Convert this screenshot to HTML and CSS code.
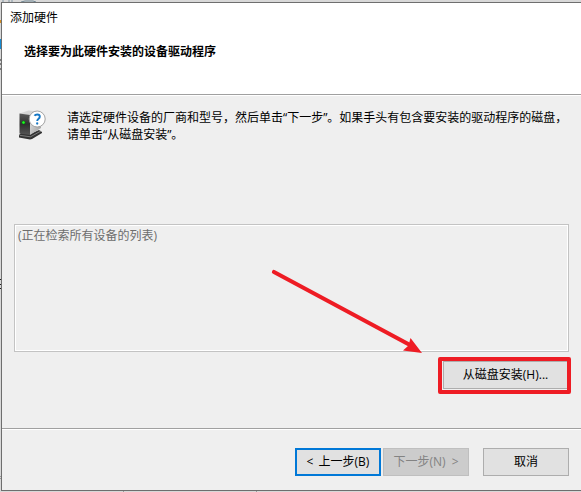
FILE: index.html
```
<!DOCTYPE html>
<html lang="zh-CN">
<head>
<meta charset="utf-8">
<title>添加硬件</title>
<link rel="stylesheet" href="styles.css">
</head>
<body>
<svg class="backdrop" width="581" height="492" viewBox="0 0 581 492" aria-hidden="true">
  <path d="M3 0v2M9 0v2M12 0v2" stroke="#8296a5"/>
  <path d="M21 2l4-1h8l3 1" stroke="#6f8794" fill="none"/>
  <path d="M0 20h1v3H0z" fill="#d18c20"/>
  <path d="M0 39h1v10H0z" fill="#168bd2"/>
  <path d="M0 60h1M0 64h1M0 69h1M0 279.500h2M0 284.500h2M0 288.500h2" stroke="#222"/>
  <path d="M0 476.500h1M0 478.500h1M123.500 491v1M256.500 491v1" stroke="#999"/>
</svg>
<main class="dialog">
  <header class="header">
    <div class="caption">添加硬件</div>
    <h1 class="title">选择要为此硬件安装的设备驱动程序</h1>
  </header>
  <section class="content">
    <div class="intro">
      <svg class="device" width="28" height="32" viewBox="0 0 28 32" aria-hidden="true">
        <defs>
          <linearGradient id="front" x2="0" y2="1"><stop stop-color="#5a5a5a"/><stop offset=".5" stop-color="#303030"/><stop offset="1" stop-color="#555"/></linearGradient>
          <linearGradient id="side" x2="1" y2="1"><stop stop-color="#eee"/><stop offset="1" stop-color="#999"/></linearGradient>
        </defs>
        <path d="M0 26l2-2 9 1 9-4 3 2v1l-10 6-2 .5-11-2z" fill="#333"/>
        <path d="M.500 4.500l9-3 10 1-9 4z" fill="#d5d5d5"/>
        <path d="M.500 4.500l10.500 1.500v20L.500 24.500z" fill="url(#front)"/>
        <path d="M11 6l11-3v16l-11 7z" fill="url(#side)"/>
        <path d="M.500 26.300l11 1.500L22 22" fill="none" stroke="#999" stroke-width=".7"/>
        <circle cx="4.500" cy="13.500" r="1.800" fill="#087b12"/>
        <circle cx="4.500" cy="13.500" r="1.200" fill="#21ff22"/>
        <circle cx="18.200" cy="10" r="8" fill="#fff" stroke="#999" stroke-width=".9"/>
        <path d="M15.500 6.800Q16.300 5.500 18.200 5.500q2.600 0 2.600 2.300c0 2-2.600 2-2.600 4.300" fill="none" stroke="#1677c5" stroke-width="1.900"/>
        <circle cx="18.200" cy="14.500" r="1.150" fill="#1677c5"/>
      </svg>
      <p class="message">请选定硬件设备的厂商和型号，然后单击“下一步”。如果手头有包含要安装的驱动程序的磁盘，<br>请单击“从磁盘安装”。</p>
    </div>
    <div class="list">(正在检索所有设备的列表)</div>
    <div class="disk-row"><div class="highlight"><button class="button disk">从磁盘安装(H)...</button></div></div>
  </section>
  <footer class="footer">
    <button class="button back">&lt; 上一步(B)</button>
    <button class="button next" disabled>下一步(N) &gt;</button>
    <button class="button cancel">取消</button>
  </footer>
</main>
<svg class="arrow" width="150" height="86" viewBox="0 0 150 86" aria-hidden="true">
  <path d="M4 3L140 76" stroke="#ee1c24" stroke-width="4.200" stroke-linecap="round"/>
  <path d="M152 84l-11.500-15-2 7.500-5.500 5z" fill="#ee1c24"/>
</svg>
</body>
</html>
```
FILE: styles.css
```
* { box-sizing: border-box; }
body {
  margin: 0;
  width: 581px;
  height: 492px;
  overflow: hidden;
  position: relative;
  padding: 2px 0 1px 1px;
  background: #d8d8d8;
  color: #000;
  font: 12px/17px "Open Sans", "Noto Sans CJK SC", sans-serif;
}
.backdrop { position: absolute; left: 0; top: 0; }
.dialog {
  display: flex;
  flex-direction: column;
  width: 580px;
  height: 489px;
  border: 1px solid #6e6e6e;
  border-right: 0;
  background: #efefef;
  position: relative;
}
.header {
  height: 92px;
  flex-shrink: 0;
  background: #fff;
  border-bottom: 1px solid #a0a0a0;
  padding: 6px 0 0 8px;
}
.caption { height: 17px; }
.title {
  margin: 17px 0 0 14px;
  font-size: 12px;
  line-height: 17px;
  font-weight: 700;
}
.content {
  height: 333px;
  border-top: 1px solid #fff;
  padding: 13px 12px 0;
}
.intro { display: flex; height: 115px; }
.device { margin: 0 0 0 5px; flex: none; overflow: visible; }
.message { margin: 0 0 0 20px; white-space: nowrap; }
.list {
  height: 128px;
  width: 555px;
  border: 1px solid #c3c3c3;
  box-shadow: inset 1px 1px #fff, inset -1px -1px #fff;
  color: #6d6d6d;
  padding: 2px 3px;
}
.disk-row { display: flex; justify-content: flex-end; padding: 5px 10px 0 0; margin-right: -12px; }
.highlight {
  width: 133px;
  height: 37px;
  border: 4px solid #ee1c24;
  border-radius: 2px;
  display: flex;
  padding: 0 0 1px 1px;
}
.button {
  width: 86px;
  height: 28px;
  padding: 0 0 1px;
  border: 1px solid #adadad;
  background: #e1e1e1;
  color: #000;
  font: inherit;
  white-space: pre;
}
.disk { width: 124px; border-right: 0; }
.footer {
  height: 62px;
  border-top: 1px solid #a0a0a0;
  box-shadow: inset 0 1px #fff;
  display: flex;
  justify-content: flex-end;
  padding: 19px 12px 0 0;
}
.back { border: 2px solid #0078d7; word-spacing: 2px; }
.next { margin: 0 14px 0 2px; background: #ccc; border-color: #bfbfbf; color: #838383; word-spacing: 3px; }
.arrow { position: absolute; left: 270px; top: 269px; overflow: visible; }
```
